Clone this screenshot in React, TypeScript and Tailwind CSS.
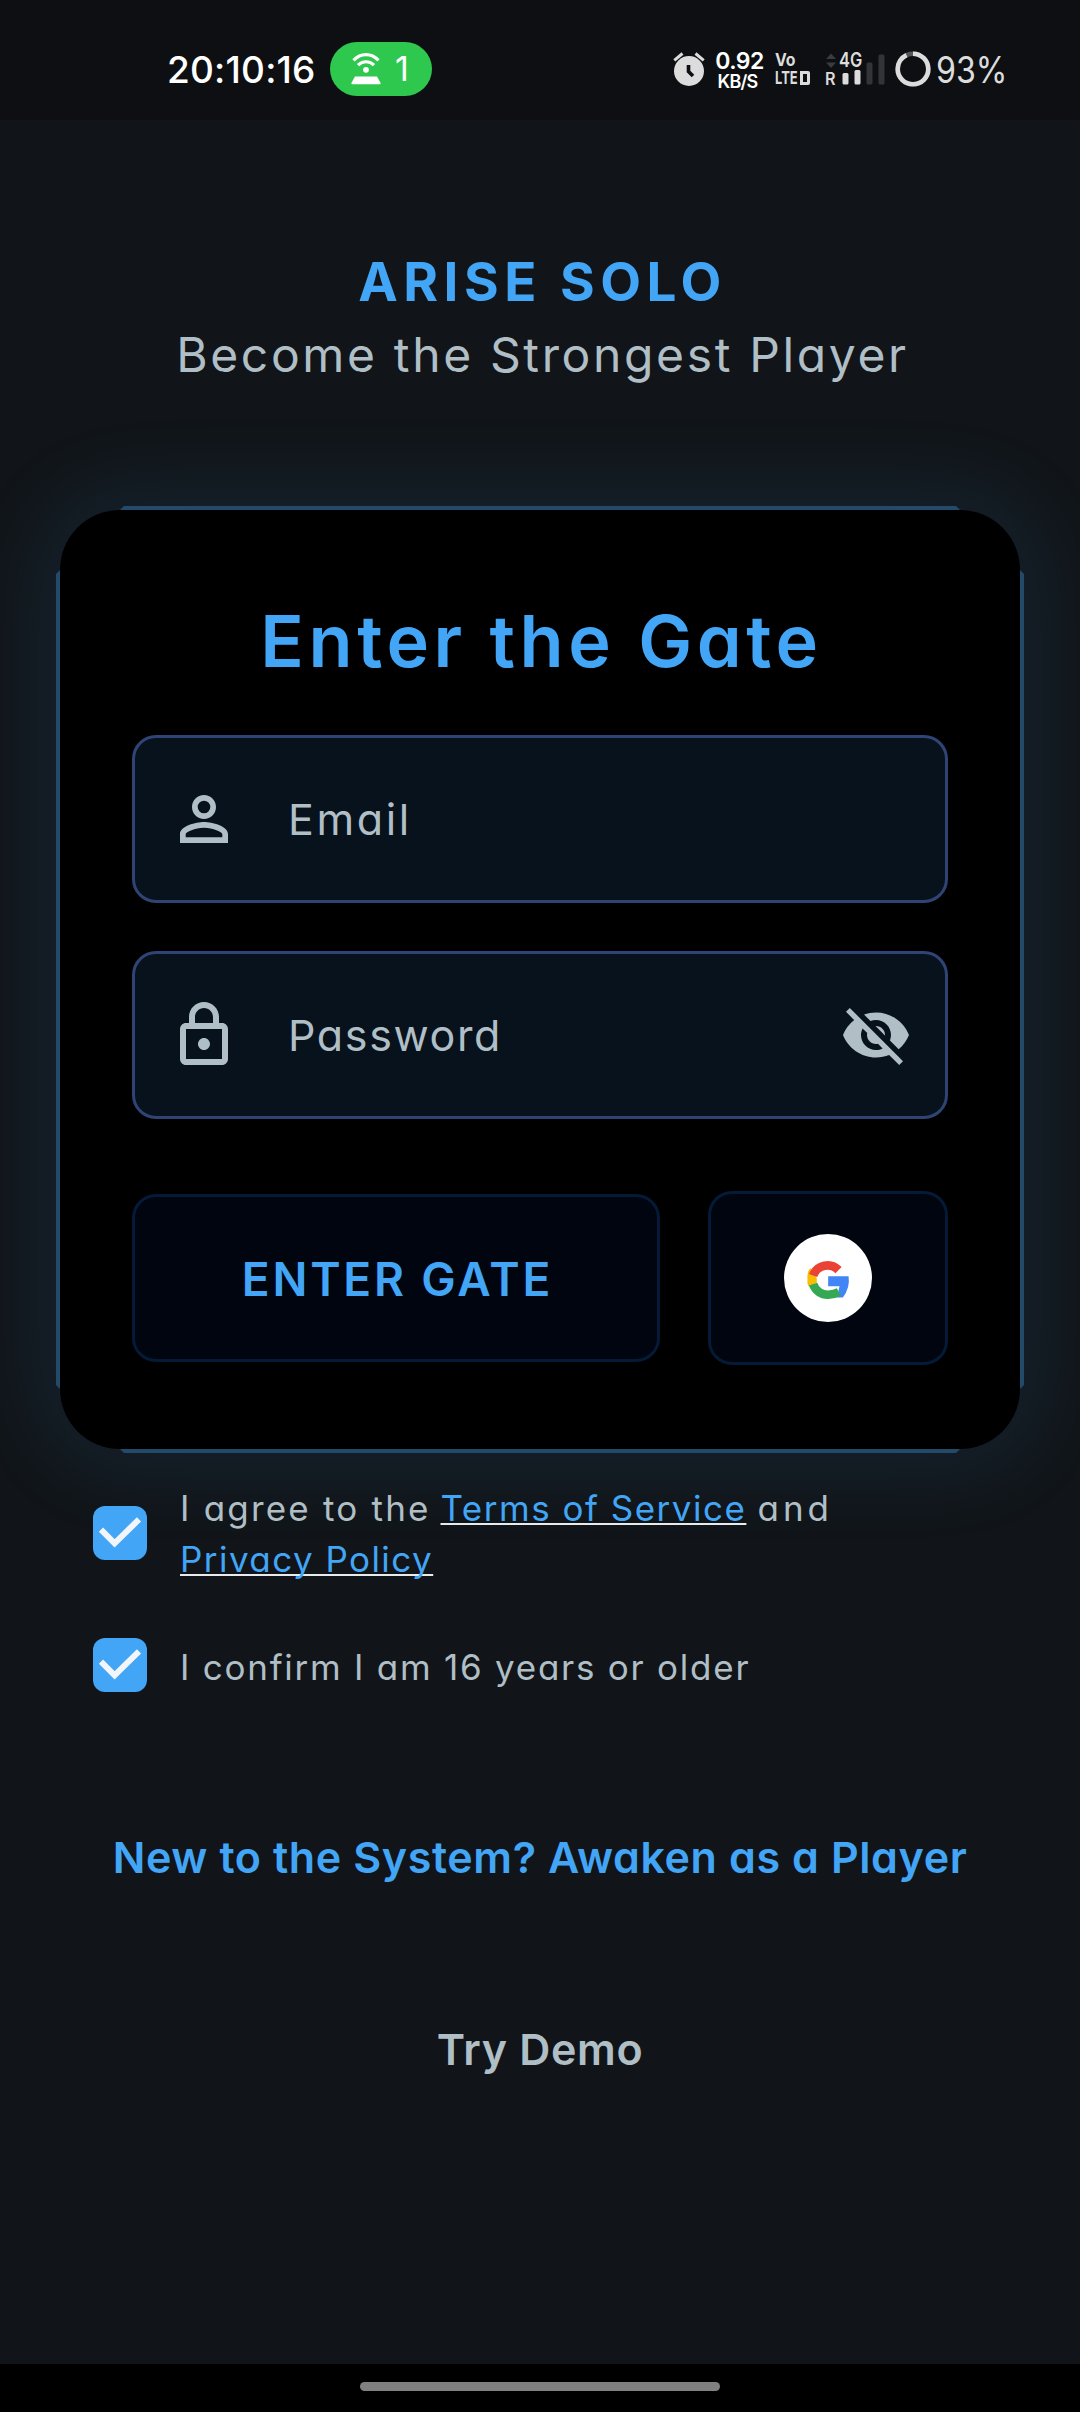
import type { ReactNode } from "react";
import { MdOutlineLock, MdPersonOutline, MdVisibilityOff } from "react-icons/md";

function HotspotIcon() {
  return (
    <svg width="32" height="34" viewBox="0 0 32 34" fill="none" className="shrink-0">
      <path d="M3.5 8.3C10.5 0.6 21.500 0.6 28.500 8.300" stroke="#fff" strokeWidth="3.200" />
      <path d="M8 13.200C12.500 8.600 19.500 8.600 24 13.200" stroke="#fff" strokeWidth="3.200" />
      <circle cx="16" cy="17.800" r="2.900" fill="#fff" />
      <path d="M5 24.500H27L30.600 31Q30.800 32.200 29.600 32.200H2.400Q1.200 32.200 1.400 31Z" fill="#fff" />
    </svg>
  );
}

function AlarmIcon() {
  return (
    <svg width="32" height="36" viewBox="0 0 32 36" fill="none" className="shrink-0">
      <circle cx="16" cy="20" r="15" fill="#dcdcdc" />
      <path d="M1.300 9.300L9.500 2.500M30.700 9.300L22.500 2.500" stroke="#dcdcdc" strokeWidth="3" />
      <path d="M15.500 14V20.500L20 25" stroke="#0d0f12" strokeWidth="3.600" />
    </svg>
  );
}

function SignalBars() {
  return (
    <svg width="60" height="34" viewBox="0 0 60 34" className="absolute inset-0">
      <path d="M1 7L6 1.500L11 7Z M1 10.500L6 16L11 10.500Z" fill="#3a3b3e" />
      <rect x="17.500" y="21" width="6" height="11.500" rx="1.500" fill="#dcdcdc" />
      <rect x="29.500" y="18" width="6" height="14.500" rx="1.500" fill="#dcdcdc" />
      <rect x="41.500" y="10.500" width="6" height="22" rx="1.500" fill="#333437" />
      <rect x="53.500" y="2.500" width="6" height="30" rx="1.500" fill="#333437" />
    </svg>
  );
}

function BatteryRing() {
  return (
    <svg width="36" height="36" viewBox="0 0 36 36" fill="none" className="shrink-0">
      <circle cx="18" cy="18" r="15.300" stroke="#55565a" strokeWidth="4.600" />
      <circle
        cx="18"
        cy="18"
        r="15.300"
        stroke="#dcdcdc"
        strokeWidth="4.600"
        pathLength="100"
        strokeDasharray="93 7"
        transform="rotate(-90 18 18)"
      />
    </svg>
  );
}

function GoogleMark() {
  return (
    <svg width="88" height="88" viewBox="0 0 263 263">
      <circle cx="131.500" cy="131.500" r="131.500" fill="#fff" />
      <path d="M80 102Q72 104 70 126V148Q72 156 77 158L98 146V132Z" fill="#fbbc05" />
      <path d="M87 124A46 46 0 0 1 163 108" fill="none" stroke="#ea4335" strokeWidth="26" />
      <path d="M132 126H193Q198 160 176 190H158L166 156H132Z" fill="#4285f4" />
      <path d="M87 150A46 46 0 0 0 132 181.500Q150 181 164 174" fill="none" stroke="#34a853" strokeWidth="26" />
    </svg>
  );
}

function StatusBar() {
  return (
    <div className="flex h-[120px] shrink-0 items-start bg-[#0d0f12] pl-[167px] font-[Inter,sans-serif]">
      <span className="mt-[46px] w-[163px] text-[37px] leading-[48px] font-medium tracking-[0.2px] text-white">20:10:16</span>
      <div className="mt-[42px] flex h-[54px] w-[102px] items-center rounded-full bg-[#2fc84f] pl-5 text-white">
        <HotspotIcon />
        <span className="ml-[13px] text-[34px] leading-[54px]">1</span>
      </div>
      <div className="mt-[51px] ml-[241px] flex items-start text-[#dcdcdc]">
        <AlarmIcon />
        <div className="-mt-[2px] ml-[9px] w-[51px] text-center text-white">
          <div className="text-[23px] leading-[24px] font-semibold tracking-[-0.600px]">0.92</div>
          <div className="mr-1 text-[18px] leading-[17px] font-semibold tracking-[-0.800px]">KB/S</div>
        </div>
        <div className="ml-[10px] w-[50px] font-bold">
          <div className="w-[25px] origin-left scale-x-[0.880] text-[18px] leading-[18px]">Vo</div>
          <div className="flex items-center">
            <span className="w-[25px] origin-left scale-x-[0.720] text-[18px] leading-[17px]">LTE</span>
            <span className="box-border h-[14px] w-[10px] rounded-r-[2px] border-[3px] border-[#dcdcdc]" />
          </div>
        </div>
        <div className="relative mt-px h-[34px] w-[60px]">
          <SignalBars />
          <span className="absolute top-0 left-[14px] origin-left scale-x-[0.820] text-[20px] leading-[17px] font-semibold">4G</span>
          <span className="absolute top-[19px] left-0 origin-left scale-x-[0.950] text-[17px] leading-[16px] font-semibold">R</span>
        </div>
        <div className="ml-[10px]">
          <BatteryRing />
        </div>
        <span className="-mt-[5px] ml-[5px] origin-left scale-x-[0.870] text-[37px] leading-[48px]">93%</span>
      </div>
    </div>
  );
}

function Field({ icon, children, trailing, className }: { icon: ReactNode; children: ReactNode; trailing?: ReactNode; className: string }) {
  return (
    <div className={`flex h-[168px] items-center rounded-[24px] border-[3px] border-[#2f4475] bg-[#07121d] px-[33px] text-[43px] text-[#b0bec5] ${className}`}>
      {icon}
      <span className="ml-[48px] flex-1 leading-[60px]">{children}</span>
      {trailing}
    </div>
  );
}

function CheckBox() {
  return (
    <div className="size-[54px] shrink-0 rounded-[12px] bg-[#42a5f5]">
      <svg width="54" height="54" viewBox="0 0 54 54" fill="none">
        <path d="M8 23.700L21.600 37.300L46 13.400" stroke="#f2f6fa" strokeWidth="6" />
      </svg>
    </div>
  );
}

/* Straight edge lines of the card; the rounded corners stay borderless. */
function CardEdges() {
  return (
    <>
      <div className="absolute -top-[4px] right-[60px] left-[60px] h-[4px] bg-[#244a69] [clip-path:polygon(4px_0,calc(100%-4px)_0,100%_100%,0_100%)]" />
      <div className="absolute right-[60px] -bottom-[4px] left-[60px] h-[4px] bg-[#244a69] [clip-path:polygon(0_0,100%_0,calc(100%-4px)_100%,4px_100%)]" />
      <div className="absolute top-[60px] bottom-[60px] -left-[4px] w-[4px] bg-[#244a69] [clip-path:polygon(0_4px,100%_0,100%_100%,0_calc(100%-4px))]" />
      <div className="absolute top-[60px] -right-[4px] bottom-[60px] w-[4px] bg-[#244a69] [clip-path:polygon(0_0,100%_4px,100%_calc(100%-4px),0_100%)]" />
    </>
  );
}

export default function App() {
  return (
    <div className="flex h-[2412px] w-[1080px] flex-col overflow-hidden bg-[#111519] font-[Inter,sans-serif] [font-feature-settings:'cv11']">
      <StatusBar />

      <header className="pt-[132px] text-center">
        <h1 className="pl-[5px] text-[53px] leading-[60px] font-bold tracking-[5.500px] text-[#42a5f5]">ARISE SOLO</h1>
        <p className="mt-[13px] pl-[5px] text-[48px] leading-[60px] tracking-[2.640px] text-[#b0bec5]">Become the Strongest Player</p>
      </header>

      <section className="relative mx-[60px] mt-[125px] h-[939px] rounded-[60px] bg-black px-[72px] pt-[91px] shadow-[0_0_90px_10px_rgba(66,165,245,0.120)]">
        <CardEdges />
        <h2 className="pl-[3px] text-center text-[72px] leading-[80px] font-semibold tracking-[4.580px] text-[#42a5f5]">Enter the Gate</h2>
        <Field className="mt-[54px] tracking-[2.600px]" icon={<MdPersonOutline size={72} />}>
          Email
        </Field>
        <Field className="mt-[48px] tracking-[1.640px]" icon={<MdOutlineLock size={72} />} trailing={<MdVisibilityOff size={72} />}>
          Password
        </Field>
        <div className="mt-[72px] flex items-center gap-[48px]">
          <button className="h-[168px] flex-1 rounded-[24px] border-[3px] border-[#041a37] bg-[#00050f] pt-[2px] pl-[3px] text-[46px] font-semibold tracking-[2.800px] text-[#42a5f5]">
            ENTER GATE
          </button>
          <button className="flex h-[174px] w-[240px] items-center justify-center rounded-[24px] border-[3px] border-[#041a37] bg-[#00050f]">
            <GoogleMark />
          </button>
        </div>
      </section>

      <section className="relative px-[93px] pt-[34px] text-[35px] text-[#b0bec5]">
        <div className="flex gap-[33px]">
          <div className="pt-[23px]">
            <CheckBox />
          </div>
          <p className="leading-[51px]">
            <span className="inline-block w-[260.500px] tracking-[2.200px]">I agree to the</span>
            <span className="inline-block w-[317px] text-[#42a5f5]">
              <span className="tracking-[1.500px] underline decoration-[#e8eaec] decoration-2 underline-offset-[2px] [text-decoration-skip-ink:none]">Terms of Service</span>
            </span>
            <span className="tracking-[4px]">and</span>
            <br />
            <span className="tracking-[1.450px] text-[#42a5f5] underline decoration-[#e8eaec] decoration-2 underline-offset-[2px] [text-decoration-skip-ink:none]">Privacy Policy</span>
          </p>
        </div>
        <div className="mt-[53px] flex gap-[33px]">
          <CheckBox />
          <p className="pt-px leading-[56px] tracking-[1.750px]">I confirm I am 16 years or older</p>
        </div>
      </section>

      <div className="mt-[132px] text-center text-[43px] leading-[60px] font-semibold tracking-[0.600px] text-[#42a5f5]">New to the System? Awaken as a Player</div>
      <div className="mt-[132px] text-center text-[43px] leading-[60px] font-semibold tracking-[0.670px] text-[#b0bec5]">Try Demo</div>

      <div className="mt-auto flex h-[48px] shrink-0 justify-center bg-black pt-[18px]">
        <div className="h-[9px] w-[360px] rounded-full bg-[#808080]" />
      </div>
    </div>
  );
}
